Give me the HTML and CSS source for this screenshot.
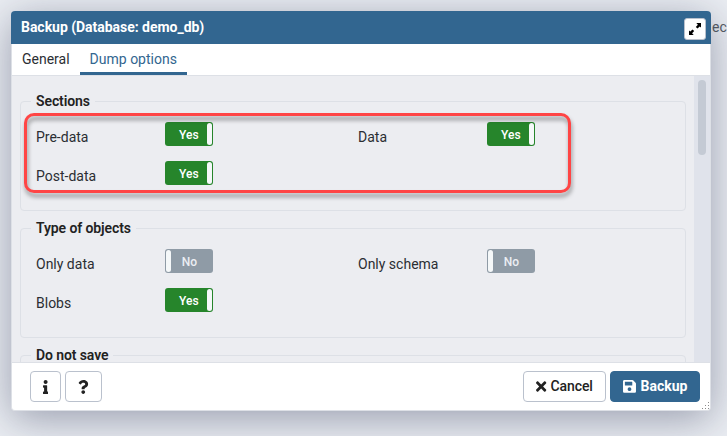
FILE: index.html
```html
<!DOCTYPE html>
<html lang="en">
<head>
<meta charset="utf-8">
<title>Backup</title>
<link rel="stylesheet" href="styles.css">
</head>
<body>
<span class="behind">ec</span>
<div class="dialog">
  <header class="header">
    <span class="title">Backup (Database: demo_db)</span>
    <button class="maximize" aria-label="Maximize">
      <svg width="14" height="14" viewBox="0 0 14 14"><path d="M8.3 1H13v4.5l-1.3-1.1-2.2 2.1-1.7-1.6 2.1-2.2zM5.7 13H1V8.5l1.3 1.1 2.2-2.1 1.7 1.6-2.1 2.2z"/></svg>
    </button>
  </header>
  <nav class="tabs"><a class="tab">General</a><a class="tab active">Dump options</a></nav>
  <main class="content">
    <div class="groups">
      <section class="group">
        <h2 class="legend">Sections</h2>
        <div class="field"><label>Pre-data</label><span class="toggle on">Yes</span></div>
        <div class="field"><label>Data</label><span class="toggle on">Yes</span></div>
        <div class="field"><label>Post-data</label><span class="toggle on">Yes</span></div>
        <div class="highlight"></div>
      </section>
      <section class="group">
        <h2 class="legend">Type of objects</h2>
        <div class="field"><label>Only data</label><span class="toggle">No</span></div>
        <div class="field"><label>Only schema</label><span class="toggle">No</span></div>
        <div class="field"><label>Blobs</label><span class="toggle on">Yes</span></div>
      </section>
      <section class="group">
        <h2 class="legend">Do not save</h2>
      </section>
    </div>
    <div class="scrollbar"><div class="thumb"></div></div>
  </main>
  <footer class="footer">
    <button class="btn info" aria-label="Info"><svg width="5.25" height="14" viewBox="0 0 192 512"><path d="M20 424.229h20V279.771H20c-11.046 0-20-8.954-20-20V212c0-11.046 8.954-20 20-20h112c11.046 0 20 8.954 20 20v212.229h20c11.046 0 20 8.954 20 20V492c0 11.046-8.954 20-20 20H20c-11.046 0-20-8.954-20-20v-47.771c0-11.046 8.954-20 20-20zM96 0C56.235 0 24 32.235 24 72s32.235 72 72 72 72-32.235 72-72S135.764 0 96 0z"/></svg></button>
    <button class="btn help" aria-label="Help"><svg width="10.5" height="14" viewBox="0 0 384 512"><path d="M202.021 0C122.202 0 70.503 32.703 29.914 91.026c-7.363 10.58-5.093 25.086 5.178 32.874l43.138 32.709c10.373 7.865 25.132 6.026 33.253-4.148 25.049-31.381 43.63-49.449 82.757-49.449 30.764 0 68.816 19.799 68.816 49.631 0 22.552-18.617 34.134-48.993 51.164-35.423 19.86-82.299 44.576-82.299 106.405V320c0 11.046 8.954 20 20 20h72.471c11.046 0 20-8.954 20-20v-5.773c0-42.86 125.268-44.645 125.268-160.627C377.504 66.256 286.902 0 202.021 0zM192 373.459c-38.196 0-69.271 31.075-69.271 69.271 0 38.195 31.075 69.27 69.271 69.27s69.271-31.075 69.271-69.271-31.075-69.27-69.271-69.27z"/></svg></button>
    <button class="btn cancel"><svg width="10.3" height="15" viewBox="0 0 352 512"><path d="M242.72 256l100.07-100.07c12.28-12.28 12.28-32.19 0-44.48l-22.24-22.24c-12.28-12.28-32.19-12.28-44.48 0L176 189.28 75.93 89.21c-12.28-12.28-32.19-12.28-44.48 0L9.21 111.45c-12.28 12.28-12.28 32.19 0 44.48L109.28 256 9.21 356.07c-12.28 12.28-12.28 32.19 0 44.48l22.24 22.24c12.28 12.28 32.2 12.28 44.48 0L176 322.72l100.07 100.07c12.28 12.28 32.2 12.28 44.48 0l22.24-22.24c12.28-12.28 12.28-32.19 0-44.48L242.72 256z"/></svg><span>Cancel</span></button>
    <button class="btn primary"><svg width="13" height="14.8" viewBox="0 0 448 512"><path d="M433.941 129.941l-83.882-83.882A48 48 0 0 0 316.118 32H48C21.49 32 0 53.49 0 80v352c0 26.51 21.49 48 48 48h352c26.51 0 48-21.49 48-48V163.882a48 48 0 0 0-14.059-33.941zM224 416c-35.346 0-64-28.654-64-64 0-35.346 28.654-64 64-64s64 28.654 64 64c0 35.346-28.654 64-64 64zm96-304.52V212c0 6.627-5.373 12-12 12H76c-6.627 0-12-5.373-12-12V108c0-6.627 5.373-12 12-12h228.52c3.183 0 6.235 1.264 8.485 3.515l3.48 3.48A11.996 11.996 0 0 1 320 111.48z"/></svg><span>Backup</span></button>
    <svg class="grip" width="8" height="8" viewBox="0 0 8 8"><path d="M6 0h1v1H6zM3 3h1v1H3zM6 3h1v1H6zM0 6h1v1H0zM3 6h1v1H3zM6 6h1v1H6z"/></svg>
  </footer>
</div>
</body>
</html>
```

FILE: styles.css
```css
* { box-sizing: border-box; }

body {
  margin: 0;
  height: 436px;
  padding: 11px;
  overflow: hidden;
  background: #ebeef3;
  font: 14px/21px Roboto, sans-serif;
  color: #2b2e33;
}

.behind {
  position: absolute;
  left: 712px;
  top: 17px;
  color: #555a62;
}

.dialog {
  position: relative;
  display: flex;
  flex-direction: column;
  width: 700px;
  height: 400px;
  background: #fff;
  border: 1px solid #dde0e6;
  border-top: 0;
  border-radius: 4px;
  box-shadow: 0 8px 42px rgba(45, 52, 85, 0.44);
}

.header {
  display: flex;
  flex-shrink: 0;
  align-items: center;
  justify-content: space-between;
  height: 33px;
  margin: 0 -1px;
  padding: 0 5px 0 10px;
  background: #326690;
  border-radius: 4px 4px 0 0;
  color: #fff;
}

.title { font-weight: 700; letter-spacing: -0.03px; }

.maximize {
  display: flex;
  align-items: center;
  justify-content: center;
  width: 22px;
  height: 22px;
  margin-top: 3px;
  padding: 0;
  border: 1px solid #bac1cd;
  border-radius: 3px;
  background: #fff;
}

.tabs {
  display: flex;
  flex-shrink: 0;
  height: 32px;
  border-bottom: 1px solid #dde0e6;
}

.tab { height: 31px; padding: 5px 10px; }

.active {
  padding-bottom: 0;
  border-bottom: 3px solid #326690;
  color: #326690;
}

.content {
  display: flex;
  flex: 1;
  min-height: 0;
  overflow: hidden;
  background: #ecedf1;
}

.groups { flex: 1; padding: 25px 8px 0; }

.group {
  position: relative;
  display: grid;
  grid-template-columns: 322px 322px;
  grid-auto-rows: 39px;
  height: 110px;
  margin-bottom: 17px;
  padding: 20px 0 0 15px;
  border: 1px solid #dde0e6;
  border-radius: 4px;
}

.legend {
  position: absolute;
  left: 10px;
  top: -11px;
  margin: 0;
  padding: 0 5px;
  background: #ecedf1;
  color: #222;
  font-size: 14px;
  font-weight: 600;
  letter-spacing: -0.1px;
}

.field { display: flex; }

.field label { width: 129px; padding-top: 5px; }

.toggle {
  display: flex;
  flex-direction: row-reverse;
  width: 48px;
  height: 24px;
  padding: 1px;
  background: #8f9ba6;
  border-radius: 3px;
  color: #ebeef3;
  font-size: 12px;
  font-weight: 500;
  line-height: 24px;
  justify-content: space-between;
}

.toggle::before { content: ""; width: 15px; }

.toggle::after {
  content: "";
  width: 5px;
  height: 22px;
  border-radius: 3px;
  background: #f5f8f9;
}

.on {
  flex-direction: row;
  background: #26852b;
  color: #fff;
}

.on::before { width: 13px; }

.toggle::before,
.toggle::after { flex-shrink: 0; }

.toggle { justify-content: flex-start; }
.toggle::after { margin-right: auto; }
.on::after { margin: 0 0 0 auto; }

.highlight {
  position: absolute;
  left: 3px;
  top: 11px;
  width: 547px;
  height: 80px;
  border: 3px solid #ff4545;
  border-radius: 10px;
  filter: drop-shadow(1px 4px 2px rgba(0, 0, 0, 0.4));
}

.scrollbar {
  width: 16px;
  padding: 4px;
  background: #e0e3eb;
}

.thumb { height: 75px; border-radius: 4px; background: #c4cad4; }

.footer {
  position: relative;
  display: flex;
  flex-shrink: 0;
  height: 48px;
  padding: 8px 10px 0 18px;
  border-top: 1px solid #dde0e6;
}

.btn {
  display: flex;
  align-items: center;
  justify-content: center;
  height: 31px;
  padding: 0;
  border: 1px solid #bac1cd;
  border-radius: 4px;
  background: #fff;
  color: #222;
  font: 500 14px/21px Roboto, sans-serif;
}

.btn svg { fill: currentColor; }

.info { width: 31px; margin-right: 4px; }
.help { width: 37px; }

.cancel {
  width: 83px;
  margin-left: auto;
  margin-right: 4px;
  gap: 4px;
  letter-spacing: -0.1px;
}

.primary {
  width: 90px;
  gap: 5px;
  border-color: #326690;
  background: #326690;
  color: #fff;
  font-weight: 700;
}

.grip {
  position: absolute;
  right: 0;
  bottom: 0;
  fill: #8b8b8b;
}
```
